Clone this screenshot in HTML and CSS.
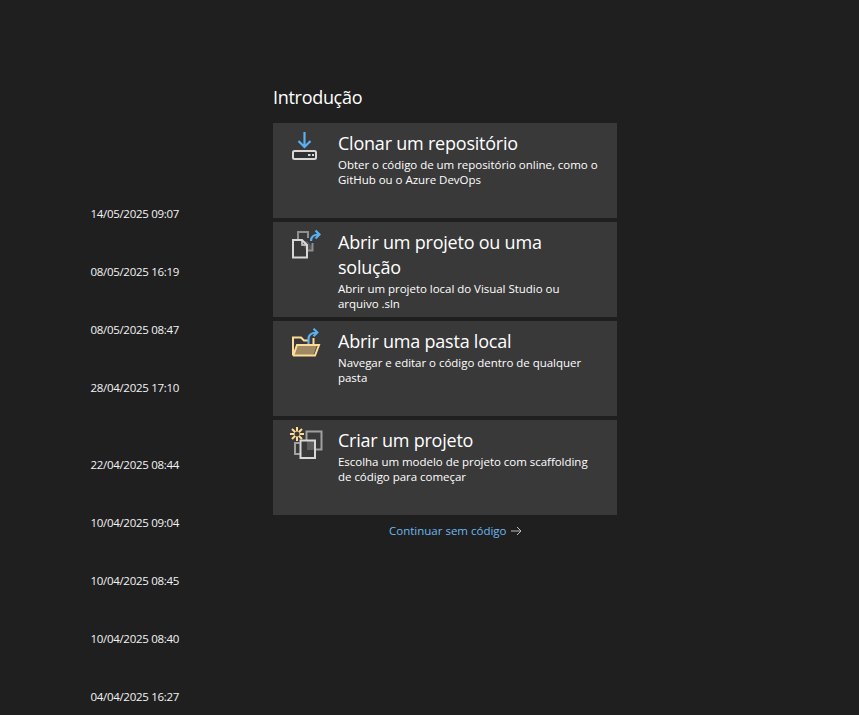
FILE: index.html
```html
<!DOCTYPE html>
<html lang="pt">
<head>
<meta charset="utf-8">
<title>Introdução</title>
<link rel="stylesheet" href="styles.css">
</head>
<body>
<div class="page">
  <div class="recent">
    <div class="date">14/05/2025 09:07</div>
    <div class="date">08/05/2025 16:19</div>
    <div class="date">08/05/2025 08:47</div>
    <div class="date date-last">28/04/2025 17:10</div>
    <div class="date">22/04/2025 08:44</div>
    <div class="date">10/04/2025 09:04</div>
    <div class="date">10/04/2025 08:45</div>
    <div class="date">10/04/2025 08:40</div>
    <div class="date">04/04/2025 16:27</div>
  </div>
  <div class="start">
    <h1 class="heading">Introdução</h1>
    <div class="cards">
      <div class="card">
        <svg class="icon" viewBox="0 0 34 32" width="34" height="32" fill="none">
          <path d="M15.500 2v15M9.500 11l6 6 6-6" stroke="#5ab0f0" stroke-width="2.200"/>
          <rect x="4" y="21" width="23" height="8" rx="1.500" fill="#303030" stroke="#d8d8d8" stroke-width="2"/>
          <path d="M19 25h2.500M23 25h2" stroke="#d8d8d8" stroke-width="2"/>
        </svg>
        <div class="text">
          <h2 class="title">Clonar um repositório</h2>
          <p class="desc">Obter o código de um repositório online, como o GitHub ou o Azure DevOps</p>
        </div>
      </div>
      <div class="card">
        <svg class="icon" viewBox="0 0 34 32" width="34" height="32" fill="none">
          <path d="M9 11V3h10v6" stroke="#8f8f8f" stroke-width="2"/>
          <path d="M12 12h6l5 5v4h-6z" fill="#555"/>
          <path d="M23.500 14v7.500H18" stroke="#8f8f8f" stroke-width="2"/>
          <path d="M4 11h9l5 5v12.500H4z" stroke="#d8d8d8" stroke-width="2"/>
          <path d="M13 11v5h5" stroke="#d8d8d8" stroke-width="1.500"/>
          <path d="M22 12c0-4.500 2.500-6.500 8-6.500M26.500 1.500 30.500 5.500 26.500 9.500" stroke="#5ab0f0" stroke-width="2.200"/>
        </svg>
        <div class="text">
          <h2 class="title">Abrir um projeto ou uma solução</h2>
          <p class="desc">Abrir um projeto local do Visual Studio ou arquivo .sln</p>
        </div>
      </div>
      <div class="card">
        <svg class="icon" viewBox="0 0 34 32" width="34" height="32" fill="none">
          <path d="M8 17.500H28L24.500 27H4.500z" fill="#a08a63"/>
          <path d="M4 27.500V9.500h8l3 3h4" stroke="#ffdc96" stroke-width="2"/>
          <path d="M4 27.500H26l4-10.500H8l-3.500 10" stroke="#ffdc96" stroke-width="2"/>
          <path d="M24.500 10v7" stroke="#ffdc96" stroke-width="2"/>
          <path d="M19.500 16V11c0-4 3-6.500 9-6.500M24.500 .8l3.800 3.700-3.800 3.700" stroke="#5ab0f0" stroke-width="2.200"/>
        </svg>
        <div class="text">
          <h2 class="title">Abrir uma pasta local</h2>
          <p class="desc">Navegar e editar o código dentro de qualquer pasta</p>
        </div>
      </div>
      <div class="card">
        <svg class="icon" viewBox="0 0 34 32" width="34" height="32" fill="none">
          <path d="M8 0v14M1 7h14M3 2l10 10M13 2 3 12" stroke="#ffdc96" stroke-width="2"/>
          <circle cx="8" cy="7" r="2.500" fill="#393939"/>
          <path d="M17.500 13V4.500h15v18H26" stroke="#a0a0a0" stroke-width="2"/>
          <path d="M18 13h8v10h-8z" fill="#5c5c5c"/>
          <path d="M10.500 16H6v11h5" stroke="#a0a0a0" stroke-width="2"/>
          <rect x="11.500" y="13.500" width="14.500" height="17.500" stroke="#d8d8d8" stroke-width="2"/>
        </svg>
        <div class="text">
          <h2 class="title">Criar um projeto</h2>
          <p class="desc">Escolha um modelo de projeto com scaffolding de código para começar</p>
        </div>
      </div>
    </div>
    <a class="skip" href="#">Continuar sem código<svg class="arrow" viewBox="0 0 11 10" width="11" height="10" fill="none"><path d="M0 5h10M6 1l4 4-4 4" stroke="#bdbdbd" stroke-width="1"/></svg></a>
  </div>
</div>
</body>
</html>
```
FILE: styles.css
```css
html, body {
  margin: 0;
  height: 100%;
  background: #1f1f1f;
  overflow: hidden;
}
body {
  font-family: "Open Sans", "Noto Sans", sans-serif;
  color: #fff;
}
.page {
  display: flex;
  align-items: flex-start;
}
.recent {
  width: 179px;
  padding-top: 206px;
  text-align: right;
  flex: none;
}
.date {
  height: 58px;
  line-height: 16px;
  font-size: 11.500px;
  letter-spacing: -0.300px;
  color: #f4f4f4;
}
.date-last {
  height: 77px;
}
.start {
  width: 344px;
  margin-left: 94px;
  padding-top: 85px;
  display: flex;
  flex-direction: column;
}
.heading {
  margin: 0 0 13px;
  font-size: 18px;
  line-height: 25px;
  font-weight: 400;
  letter-spacing: -0.300px;
}
.cards {
  display: flex;
  flex-direction: column;
  gap: 4px;
}
.card {
  height: 95px;
  box-sizing: border-box;
  background: #393939;
  padding: 7px 0 0 16px;
  display: flex;
}
.icon {
  flex: none;
}
.text {
  margin-left: 15px;
  width: 264px;
}
.title {
  margin: 0;
  padding-top: 1px;
  font-size: 18px;
  line-height: 25px;
  font-weight: 400;
  letter-spacing: -0.220px;
  color: #fff;
}
.desc {
  margin: 1px 0 0;
  font-size: 11.500px;
  line-height: 15px;
  letter-spacing: -0.030px;
  color: #fff;
}
.skip {
  margin: 8px 0 0 116px;
  align-self: flex-start;
  display: flex;
  align-items: center;
  font-size: 11.500px;
  line-height: 16px;
  letter-spacing: 0;
  color: #6cb8f0;
  text-decoration: none;
}
.arrow {
  flex: none;
  margin-left: 4px;
}
```
